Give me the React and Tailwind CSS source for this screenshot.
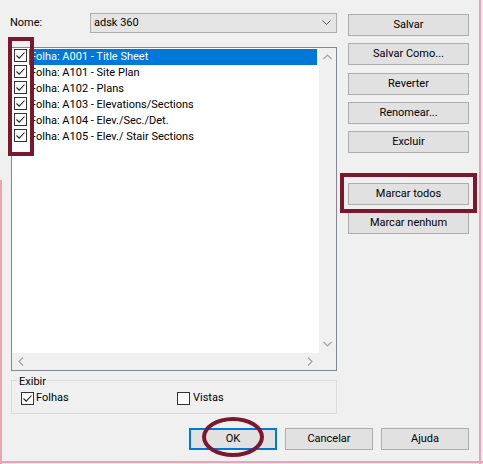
import React from "react";

const font = { fontFamily: 'Roboto, "Liberation Sans", sans-serif' };

function Check({ checked }) {
  return (
    <span className="relative inline-block w-[13px] h-[13px] border border-[#333] bg-white shrink-0">
      {checked && (
        <svg width="11" height="11" viewBox="0 0 11 11" className="absolute left-0 top-0">
          <path d="M1.5 5.5 L4.2 8.2 L9.5 2.5" fill="none" stroke="#222" strokeWidth="1.1" />
        </svg>
      )}
    </span>
  );
}

function Btn({ children, className = "" }) {
  return (
    <div className={`h-[22px] flex items-center justify-center bg-[#e1e1e1] border border-[#adadad] text-[11px] text-black ${className}`}>
      {children}
    </div>
  );
}

const rows = [
  "Folha: A001 - Title Sheet",
  "Folha: A101 - Site Plan",
  "Folha: A102 - Plans",
  "Folha: A103 - Elevations/Sections",
  "Folha: A104 - Elev./Sec./Det.",
  "Folha: A105 - Elev./ Stair Sections",
];

export default function App() {
  return (
    <div className="relative w-[483px] h-[464px] bg-[#f0f0f0] overflow-hidden text-black" style={font}>
      <div className="flex pt-[13px]">
        {/* left column */}
        <div className="ml-[11px] w-[326px] flex flex-col">
          <div className="h-[20px] flex items-center">
            <span className="text-[11px] -ml-[1px]">Nome:</span>
            <div className="ml-auto w-[247px] h-[20px] bg-[#e5e5e5] border border-[#adadad] flex items-center pl-[3px] pr-[5px] text-[11px]">
              <span>adsk 360</span>
              <svg className="ml-auto" width="9" height="6" viewBox="0 0 9 6">
                <path d="M0.5 0.5 L4.5 4.5 L8.5 0.5" fill="none" stroke="#555" strokeWidth="1" />
              </svg>
            </div>
          </div>
          {/* list */}
          <div className="mt-[14px] h-[324px] border border-[#828790] bg-white flex flex-col">
            <div className="flex flex-1 min-h-0">
              <div className="flex-1 pt-[1px]">
                {rows.map((r, i) => (
                  <div key={r} className="h-[16px] flex items-center">
                    <span className="ml-[2px]"><Check checked /></span>
                    <span
                      className={`ml-[2px] h-[16px] flex items-center text-[11px] pl-[1px] ${i === 0 ? "bg-[#0078d7] text-white w-[288px]" : ""}`}
                    >
                      {r}
                    </span>
                  </div>
                ))}
              </div>
              <div className="w-[17px] bg-[#f0f0f0] flex flex-col items-center justify-between py-[6px]">
                <svg width="9" height="6" viewBox="0 0 9 6">
                  <path d="M0.5 5 L4.5 1 L8.5 5" fill="none" stroke="#a3a3a3" strokeWidth="1.2" />
                </svg>
                <svg width="9" height="6" viewBox="0 0 9 6">
                  <path d="M0.5 1 L4.5 5 L8.5 1" fill="none" stroke="#a3a3a3" strokeWidth="1.2" />
                </svg>
              </div>
            </div>
            <div className="h-[17px] bg-[#f0f0f0] flex items-center">
              <div className="flex-1 flex items-center justify-between px-[6px]">
                <svg width="6" height="9" viewBox="0 0 6 9">
                  <path d="M5 0.5 L1 4.5 L5 8.5" fill="none" stroke="#a3a3a3" strokeWidth="1.2" />
                </svg>
                <svg width="6" height="9" viewBox="0 0 6 9">
                  <path d="M1 0.5 L5 4.5 L1 8.5" fill="none" stroke="#a3a3a3" strokeWidth="1.2" />
                </svg>
              </div>
              <div className="w-[17px]" />
            </div>
          </div>
          {/* group box */}
          <div className="mt-[1px] h-[42px] relative">
            <div className="absolute inset-x-0 top-[8px] bottom-0 border border-[#dcdcdc]" />
            <div className="relative flex mt-[3px]">
              <span className="ml-[7px] px-[1px] bg-[#f0f0f0] text-[11px] h-[14px] leading-[14px]">Exibir</span>
            </div>
            <div className="relative flex items-center mt-[2px] h-[14px]">
              <div className="ml-[10px] w-[156px] flex items-center">
                <Check checked />
                <span className="ml-[2px] text-[11px]">Folhas</span>
              </div>
              <Check />
              <span className="ml-[3px] text-[11px]">Vistas</span>
            </div>
          </div>
        </div>
        {/* right column */}
        <div className="ml-[11px] w-[121px] flex flex-col">
          <Btn className="mt-[1px]">Salvar</Btn>
          <Btn className="mt-[7px]">Salvar Como...</Btn>
          <Btn className="mt-[8px]">Reverter</Btn>
          <Btn className="mt-[7px]">Renomear...</Btn>
          <Btn className="mt-[7px]">Excluir</Btn>
          <Btn className="mt-[30px]">Marcar todos</Btn>
          <Btn className="mt-[7px]">Marcar nenhum</Btn>
        </div>
      </div>
      {/* bottom buttons */}
      <div className="flex justify-end mt-[14px] pr-[14px] gap-[8px]">
        <Btn className="w-[88px] !border-[#0078d7] border-2">OK</Btn>
        <Btn className="w-[88px]">Cancelar</Btn>
        <Btn className="w-[88px]">Ajuda</Btn>
      </div>

      {/* annotation overlays */}
      <div className="absolute left-[8px] top-[37px] w-[26px] h-[119px] border-[4px] border-[#7b1830]" />
      <div className="absolute left-[340px] top-[173px] w-[137px] h-[40px] border-[4px] border-[#7b1830]" />
      <div className="absolute left-[202px] top-[417px] w-[62px] h-[40px] rounded-[50%] border-[4px] border-[#7b1830]" />

      {/* pink window edges */}
      <div className="absolute right-[2px] top-0 bottom-0 w-[2px] bg-[#e9a3b3]" />
      <div className="absolute left-0 right-0 bottom-[1px] h-[2px] bg-[#e9a3b3]" />
      <div className="absolute left-0 top-[180px] bottom-0 w-[2px] bg-[#e9a3b3]" />
    </div>
  );
}
